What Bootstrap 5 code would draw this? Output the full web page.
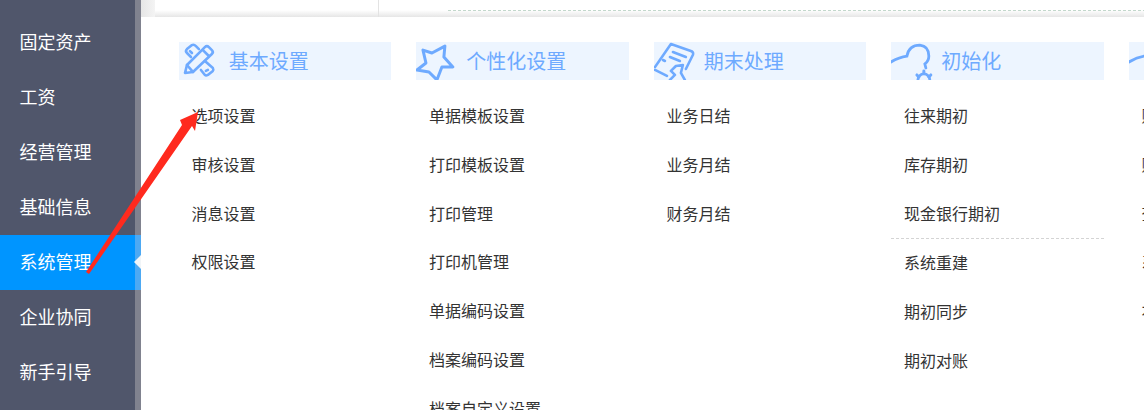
<!DOCTYPE html>
<html lang="zh"><head><meta charset="utf-8">
<link href="https://cdn.jsdelivr.net/npm/bootstrap@5.3.0/dist/css/bootstrap.min.css" rel="stylesheet">
<style>
html,body{height:410px;overflow:hidden;background:#fff}
body{font-family:"Noto Sans CJK SC","Liberation Sans",sans-serif;color:#333}
.stage{height:410px;width:1144px;overflow:hidden;position:relative}
.side{width:141px;flex:none;background:#50566b;border-right:6px solid #80828f;padding-top:15px}
.side-item{height:55px;line-height:53px;padding-left:19.500px;font-size:18px;color:#fff;position:relative}
.side-item.on{background:#0095ff;margin-right:-6px;border-right:6px solid #4da9f3}
.side-item.on::after{content:"";position:absolute;right:-6px;top:20px;border:7px solid transparent;border-right-color:#f1f5f8;border-left:0}
.topstrip{height:17px;flex:none;background:linear-gradient(#fff 60%,#e6e6e6);position:relative}
.topleft{width:14px;background:linear-gradient(90deg,#e6e6e6,#f4f4f4)}
.topcell{width:224px;border-right:1px solid #e3e3e3}
.topdash{margin:10px 0 0 69px;height:1px;flex:1;border-top:1px dashed #c3d8cc}
.cols{padding:25px 0 0 37.900px;gap:25px;width:1160px}
.colm{width:212.5px;flex:none}
.head{height:38px;background:#edf5ff;color:#6eaaff;font-size:20px;line-height:38px;overflow:hidden}
.head svg{flex:none;display:block;width:49.800px}
.menu{padding:11px 0 0 12.500px}
.menu-item{height:48.75px;line-height:49px;font-size:16px;white-space:nowrap}
.sep{border-top:1px dashed #d4d4d4;margin:1px 0 -1px -12.500px;height:0}
.arrow{position:absolute;left:0;top:0;pointer-events:none}
</style></head><body>
<div class="stage d-flex">
<div class="side">
<div class="side-item">固定资产</div><div class="side-item">工资</div><div class="side-item">经营管理</div><div class="side-item">基础信息</div><div class="side-item on">系统管理</div><div class="side-item">企业协同</div><div class="side-item">新手引导</div>
</div>
<div class="flex-grow-1 d-flex flex-column">
<div class="topstrip d-flex"><div class="topleft"></div><div class="topcell"></div><div class="topdash"></div></div>
<div class="cols d-flex">
<div class="colm"><div class="head d-flex"><svg height="38" viewBox="0 0 50 38" fill="none" stroke="#6eaaff" stroke-width="2.6" stroke-linejoin="round" stroke-linecap="round"><path d="M6 31L8 23 26 5Q28 3 30 5L33 8Q35 10 33 12L14 30Z"/><path d="M24 8l6 6M8 23l6 7"/><path d="M12 15L8 11Q6 9 8 7L13 3Q15 2 17 4L20 7M11 9l2 2M26 19L34 26Q35 28 34 29L29 33Q27 34 26 33L22 28M29 28l-2 1"/></svg><span>基本设置</span></div>
<div class="menu"><div class="menu-item">选项设置</div><div class="menu-item">审核设置</div><div class="menu-item">消息设置</div><div class="menu-item">权限设置</div></div></div>
<div class="colm"><div class="head d-flex"><svg height="38" viewBox="0 0 50 38" fill="none" stroke="#6eaaff" stroke-width="3" stroke-linejoin="round"><path d="M29 4L28 15 37 25 26 25 21 38 13 30 1 28 10 21 7 8 16 11Z"/></svg><span>个性化设置</span></div>
<div class="menu"><div class="menu-item">单据模板设置</div><div class="menu-item">打印模板设置</div><div class="menu-item">打印管理</div><div class="menu-item">打印机管理</div><div class="menu-item">单据编码设置</div><div class="menu-item">档案编码设置</div><div class="menu-item">档案自定义设置</div></div></div>
<div class="colm"><div class="head d-flex"><svg height="38" viewBox="0 0 50 38" fill="none" stroke="#6eaaff" stroke-width="2.6" stroke-linejoin="round" stroke-linecap="round"><path d="M17 2L1 25M17 2L37 9Q40 10 39 13L32 27M1 28L13 34M29 23L22 24 17 29 21 33 16 38M29 23L27 31 31 38"/><path d="M19 10l13 5M16 15l10 4M9 18l2 1"/></svg><span>期末处理</span></div>
<div class="menu"><div class="menu-item">业务日结</div><div class="menu-item">业务月结</div><div class="menu-item">财务月结</div></div></div>
<div class="colm"><div class="head d-flex"><svg height="38" viewBox="0 0 50 38" fill="none" stroke="#6eaaff" stroke-width="2.8" stroke-linecap="round"><path d="M0 20q8-5 16-6 2-11 13-11 9 1 9 11 0 5-4 8l1 4"/><circle cx="33" cy="38" r="6"/><path d="M33 29v2M26 33l2 2M40 33l-2 2" stroke-width="3"/></svg><span>初始化</span></div>
<div class="menu"><div class="menu-item">往来期初</div><div class="menu-item">库存期初</div><div class="menu-item">现金银行期初</div><div class="sep"></div><div class="menu-item">系统重建</div><div class="menu-item">期初同步</div><div class="menu-item">期初对账</div></div></div>
<div class="colm"><div class="head d-flex"><svg height="38" viewBox="0 0 50 38" fill="none" stroke="#6eaaff" stroke-width="2.8" stroke-linecap="round"><path d="M0 20q8-5 16-6 2-11 13-11"/></svg><span>账表</span></div>
<div class="menu"><div class="menu-item">账簿设置</div><div class="menu-item">账表设置</div><div class="menu-item">查询设置</div><div class="menu-item">系统设置</div><div class="menu-item">本期设置</div></div></div>
</div></div>
<svg class="arrow" width="1144" height="410" viewBox="0 0 1144 410"><path d="M86 272L182 125 180 120 198 112 195 131 192 126 89 274Z" fill="#ff2a1e"/></svg>
</div>
<script src="https://cdn.jsdelivr.net/npm/bootstrap@5.3.0/dist/js/bootstrap.bundle.min.js"></script>
</body></html>
